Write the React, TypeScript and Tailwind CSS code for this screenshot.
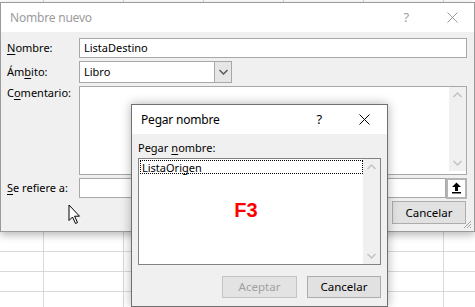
import React from "react";

const font = { fontFamily: '"Noto Sans", "Open Sans", sans-serif' };

function CloseX({ color }: { color: string }) {
  return (
    <svg width="11" height="11" viewBox="0 0 11 11">
      <path d="M0.5 0.5 L10.5 10.5 M10.5 0.5 L0.5 10.5" stroke={color} strokeWidth="1" />
    </svg>
  );
}

function Chevron({ up, color }: { up?: boolean; color: string }) {
  return (
    <svg width="9" height="6" viewBox="0 0 9 6">
      <path d={up ? "M0.5 5 L4.5 1 L8.5 5" : "M0.5 1 L4.5 5 L8.5 1"} stroke={color} strokeWidth="1.4" fill="none" />
    </svg>
  );
}

function Scrollbar({ h }: { h: string }) {
  return (
    <div className={`w-[17px] ${h} bg-[#f0f0f0] flex flex-col items-center justify-between py-[5px]`}>
      <Chevron up color="#c2c2c2" />
      <Chevron color="#c2c2c2" />
    </div>
  );
}

export default function App() {
  return (
    <div
      className="relative w-[475px] h-[307px] overflow-hidden bg-white bg-[linear-gradient(to_right,#d9d9d9_1px,transparent_1px),linear-gradient(to_bottom,#d9d9d9_1px,transparent_1px)] bg-[size:80px_20px] bg-[position:43px_11px]"
      style={font}
    >
      {/* Main dialog: Nombre nuevo */}
      <div className="absolute left-0 top-[2px] w-[475px] h-[230px] border border-[#9a9a9a] bg-[#f0f0f0] flex flex-col shadow-[0_3px_8px_rgba(0,0,0,0.28)]">
        <div className="h-[29px] bg-white flex items-center pl-[9px] pr-[16px] text-[12px] tracking-[-0.2px] text-[#9b9b9b]">
          <span className="flex-1">Nombre nuevo</span>
          <span className="mr-[38px] text-[13px] text-[#a0a0a0]">?</span>
          <CloseX color="#9b9b9b" />
        </div>
        <div className="flex-1 flex flex-col pl-[6px] pr-[7px] pt-[6px] text-[11px] text-black">
          <div className="flex items-center h-[20px]">
            <span className="w-[72px]"><u className="underline-offset-2">N</u>ombre:</span>
            <div className="flex-1 h-[20px] bg-white border border-[#a8a8a8] flex items-center pl-[4px]">ListaDestino</div>
          </div>
          <div className="flex items-center h-[22px] mt-[3px]">
            <span className="w-[72px]">Ám<u className="underline-offset-2">b</u>ito:</span>
            <div className="w-[153px] h-[22px] bg-white border border-[#a8a8a8] flex items-center">
              <span className="flex-1 pl-[4px]">Libro</span>
              <div className="w-[18px] h-[22px] -mr-px -my-px border border-[#a8a8a8] bg-[#e6e6e6] flex items-center justify-center">
                <Chevron color="#555" />
              </div>
            </div>
          </div>
          <div className="flex items-start h-[89px] mt-[3px]">
            <span className="w-[72px] leading-[14px]">C<u className="underline-offset-2">o</u>mentario:</span>
            <div className="flex-1 h-[89px] bg-white border border-[#a8a8a8] flex justify-end">
              <Scrollbar h="h-[84px]" />
            </div>
          </div>
          <div className="flex items-center h-[20px] mt-[3px]">
            <span className="w-[72px]"><u className="underline-offset-2">S</u>e refiere a:</span>
            <div className="flex-1 h-[20px] bg-white border border-[#a8a8a8]" />
            <div className="w-[21px] h-[21px] border-2 border-[#b4b4b4] bg-white flex items-center justify-center">
              <svg width="11" height="12" viewBox="0 0 11 12">
                <path d="M5.5 0.5 L10 5 L7 5 L7 9 L4 9 L4 5 L1 5 Z" fill="#000" />
                <rect x="1" y="10" width="9" height="1.5" fill="#000" />
              </svg>
            </div>
          </div>
          <div className="flex justify-end mt-[3px]">
            <div className="w-[74px] h-[23px] mr-[1px] bg-[#e1e1e1] border border-[#adadad] flex items-center justify-center text-[11.5px]">Cancelar</div>
          </div>
        </div>
        {/* resize grip */}
        <svg className="absolute right-[2px] bottom-[2px]" width="9" height="9" viewBox="0 0 9 9">
          <path d="M8 1 L1 8 M8 4 L4 8 M8 7 L7 8" stroke="#a0a0a0" strokeWidth="1" />
        </svg>
      </div>

      {/* Mouse cursor */}
      <svg className="absolute left-[68px] top-[204px]" width="14" height="21" viewBox="0 0 14 21">
        <path d="M1 1 L1 16.5 L4.5 13 L7.5 19.5 L9.5 18.6 L6.6 12.2 L11.5 12.2 Z" fill="#fff" stroke="#000" strokeWidth="1" strokeLinejoin="round" />
      </svg>

      {/* Pegar nombre dialog */}
      <div className="absolute left-[131px] top-[104px] w-[257px] h-[203px] border border-[#707070] bg-[#f0f0f0] flex flex-col shadow-[0_0_10px_rgba(0,0,0,0.3)]">
        <div className="h-[29px] bg-white flex items-center pl-[9px] pr-[17px] text-[12px] tracking-[-0.2px] text-black">
          <span className="flex-1">Pegar nombre</span>
          <span className="mr-[37px] text-[13px]">?</span>
          <CloseX color="#000" />
        </div>
        <div className="flex-1 flex flex-col pl-[6px] pr-[6px] text-[11px] text-black">
          <div className="h-[24px] flex items-end pb-[2px]">
            Pegar <u className="underline-offset-2 ml-[3px]">n</u>ombre:
          </div>
          <div className="h-[107px] bg-white border border-[#828282] flex relative">
            <div className="flex-1 pl-[1px] pt-[1px]">
              <div className="h-[14px] border border-dotted border-black flex items-center pl-[1px] leading-none">ListaOrigen</div>
              <div className="flex justify-center pt-[26px] pr-[11px]">
                <span className="text-[20px] font-bold text-[#ff0000] leading-none" style={{ fontFamily: '"Liberation Sans", Arial, sans-serif' }}>F3</span>
              </div>
            </div>
            <Scrollbar h="h-[105px]" />
          </div>
          <div className="flex justify-end gap-[10px] mt-[11px]">
            <div className="w-[75px] h-[22px] bg-[#e3e3e3] border border-[#c4c4c4] text-[#a0a0a0] flex items-center justify-center text-[11.5px]">Aceptar</div>
            <div className="w-[74px] h-[22px] bg-[#e1e1e1] border border-[#adadad] flex items-center justify-center text-[11.5px]">Cancelar</div>
          </div>
        </div>
      </div>
    </div>
  );
}
